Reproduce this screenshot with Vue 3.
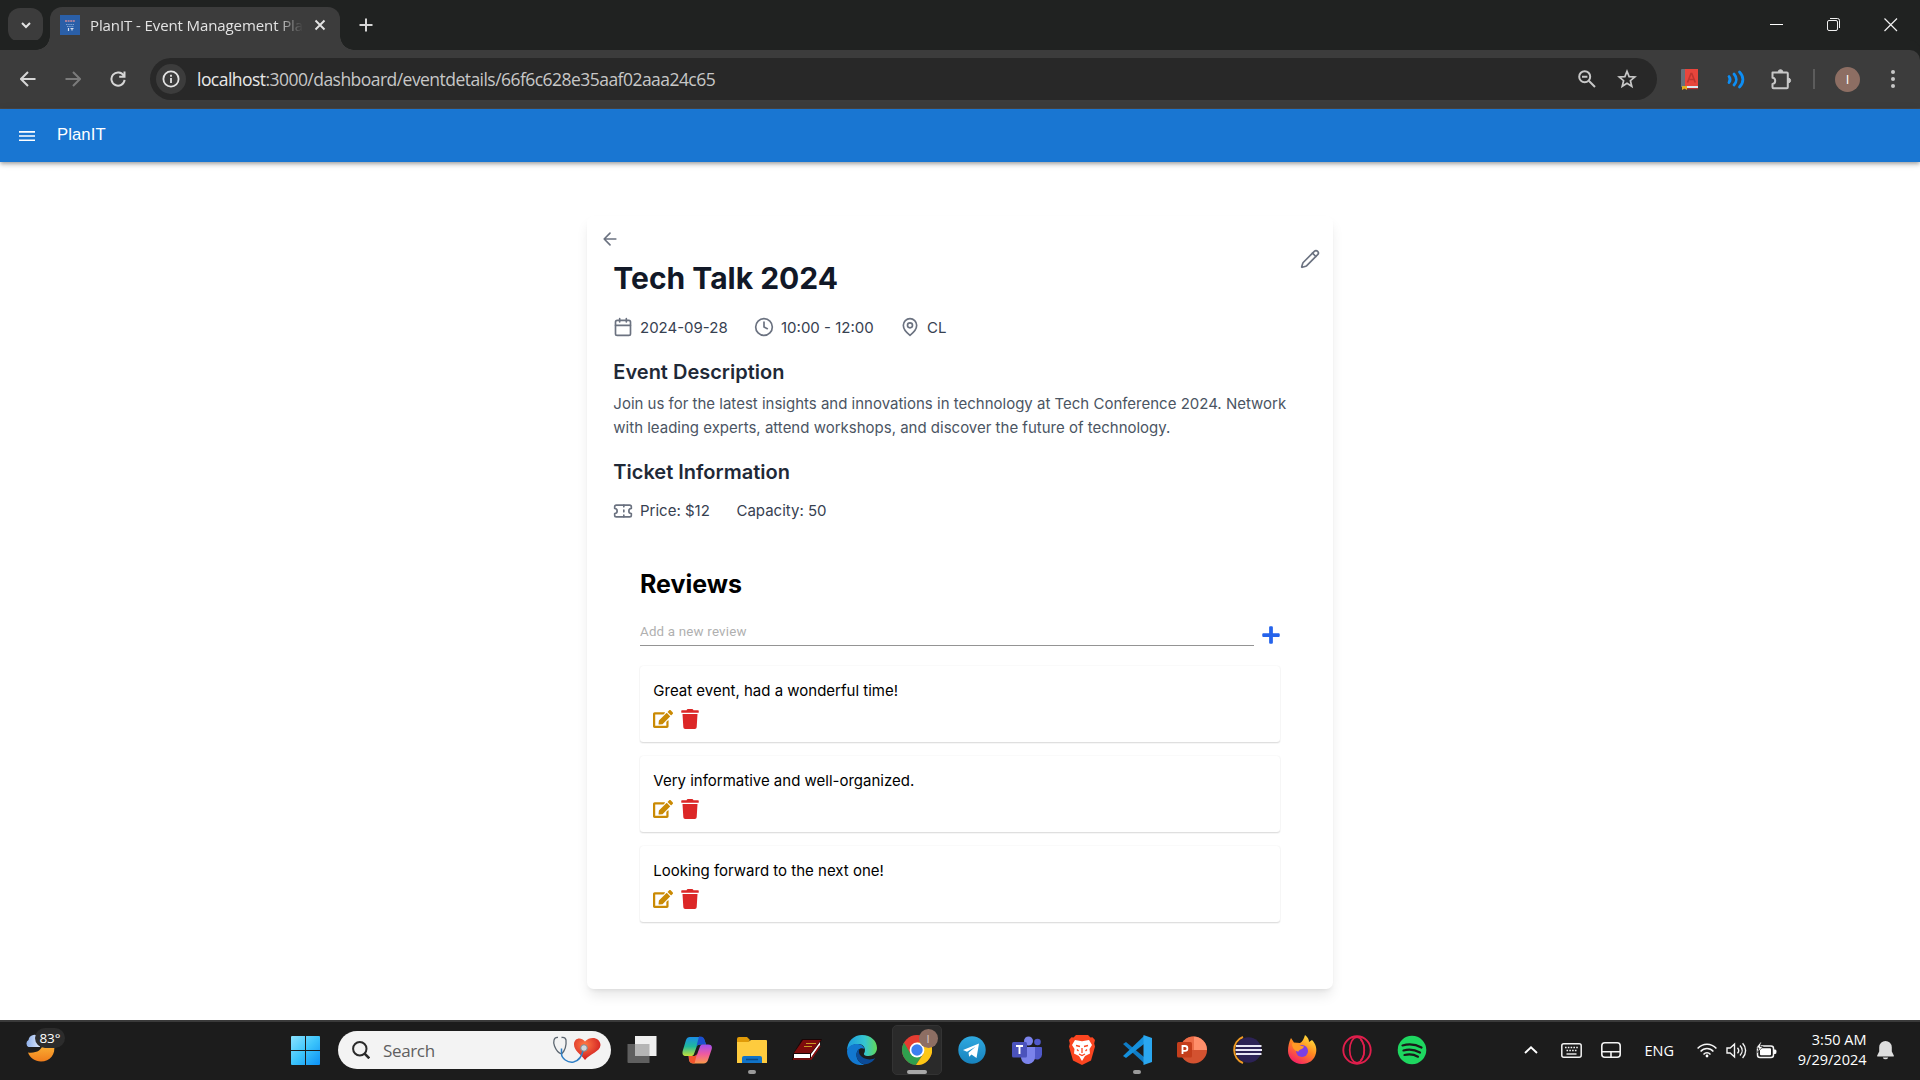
<script setup>
const reviews = [
  'Great event, had a wonderful time!',
  'Very informative and well-organized.',
  'Looking forward to the next one!',
]
</script>

<template>
  <div class="screen">
    <div class="tabstrip">
      <button class="tab-search"><svg width="12" height="12" viewBox="0 0 12 12"><path d="M2 4l4 4 4-4" fill="none" stroke="#e3e3e3" stroke-width="2" /></svg></button>
      <div class="tab">
        <svg class="favicon" viewBox="0 0 20 20"><rect width="20" height="20" fill="#2a5fa8" /><path d="M5 6h10" stroke="#c98a9c" stroke-width="1.6" stroke-dasharray="2 .6" /><path d="M6 9.500h8M7 11.500h7" stroke="#7ea3d4" stroke-width="1.200" stroke-dasharray="1.500 .7" /><path d="M8.500 13v3M10.500 13.500h3M12 13.500v2" stroke="#d5dfef" stroke-width="1.200" /></svg>
        <span class="tab-title">PlanIT - Event Management Plat</span>
        <svg class="tab-close" width="12" height="12" viewBox="0 0 12 12"><path d="M1.500 1.500l9 9M10.500 1.500l-9 9" stroke="#e3e3e3" stroke-width="1.900" /></svg>
      </div>
      <svg class="new-tab" width="14" height="14" viewBox="0 0 14 14"><path d="M7 .5v13M.5 7h13" stroke="#d6d6d6" stroke-width="2" /></svg>
      <div class="win">
        <svg width="14" height="14" viewBox="0 0 14 14"><path d="M0 6.500h13" stroke="#fff" /></svg>
        <svg width="14" height="14" viewBox="0 0 14 14" fill="none" stroke="#f0f0f0"><rect x=".5" y="2.500" width="10" height="10" rx="1.500" /><path d="M3 .5h7.500a2 2 0 0 1 2 2V10" /></svg>
        <svg width="14" height="14" viewBox="0 0 14 14"><path d="M.5.5l12.500 12.500M13 .5L.5 13" stroke="#f0f0f0" stroke-width="1.200" /></svg>
      </div>
    </div>

    <div class="toolbar">
      <svg class="nav back" width="16" height="16" viewBox="0 0 16 16"><path d="M15.500 8H1.500M8 1L1 8l7 7" /></svg>
      <svg class="nav fwd" width="16" height="16" viewBox="0 0 16 16"><path d="M.5 8h14M8 1l7 7-7 7" /></svg>
      <svg class="nav rel" width="16" height="16" viewBox="0 0 16 16"><path d="M13.700 4.600A6.600 6.600 0 1 0 14.600 8.800M14.500.5v5.300H9.200" /></svg>
      <div class="omnibox">
        <span class="info"><svg width="18" height="18" viewBox="0 0 18 18"><circle cx="9" cy="9" r="7.600" fill="none" stroke="#e3e3e3" stroke-width="1.800" /><path d="M9 8v5M9 4.800v1.900" stroke="#e3e3e3" stroke-width="1.800" /></svg></span>
        <span class="url"><b>localhost</b>:3000/dashboard/eventdetails/66f6c628e35aaf02aaa24c65</span>
        <svg class="mag" width="18" height="18" viewBox="0 0 18 18" fill="none" stroke="#c7c7c7" stroke-width="2"><circle cx="6.700" cy="6.700" r="5.500" /><path d="M10.800 10.800l6.200 6.200M4 6.700h5.400" /></svg>
        <svg class="star" width="20" height="20" viewBox="0 0 20 20"><path d="M10 2.300l2.100 5.300 5.700.4-4.400 3.700 1.400 5.600L10 14.200l-4.800 3.100 1.400-5.600L2.200 8l5.700-.4z" fill="none" stroke="#c7c7c7" stroke-width="1.700" /></svg>
      </div>
      <svg class="ext-book" width="18" height="21" viewBox="0 0 18 21"><path d="M0 1q0-1 1-1h3v18H0z" fill="#66707a" /><path d="M4 0h13v17H4z" fill="#e8453c" /><path d="M2 17h15v2.500H2z" fill="#dbe6f0" /><path d="M1 19h16v1.200H1z" fill="#b52d2d" /><path d="M6.500 13.500L10 4.500h.8l3.500 9M8 10.500h5" stroke="#bf352f" stroke-width="1.600" fill="none" /><path d="M1 17h5v4l-2.500-1.500L1 21z" fill="#e3b021" /></svg>
      <svg class="ext-wave" width="18" height="19" viewBox="0 0 18 19" fill="none" stroke="#0d8ef5" stroke-width="2.800" stroke-linecap="round"><path d="M2 6.500c1.400 1.800 1.400 4 0 6M7 4c3 3.300 3 7.700 0 11M12.500 2c4.500 4.500 4.500 10.500 0 15" /></svg>
      <svg class="ext-puz" width="21" height="21" viewBox="0 0 21 21"><path d="M1.500 3.500h14.300q1 0 1 1V18.300q0 1-1 1H2.500q-1 0-1-1V15c3.600-.3 3.600-6 0-6.300z" fill="none" stroke="#c7c7c7" stroke-width="2" stroke-linejoin="round" /><path d="M7.200 3a2.300 2.300 0 0 1 4.600 0zM17.300 9.200a2.300 2.300 0 0 1 0 4.600z" fill="#c7c7c7" stroke="#c7c7c7" /></svg>
      <span class="sep"></span>
      <span class="avatar">I</span>
      <svg class="dots" width="4" height="18" viewBox="0 0 4 18" fill="#c7c7c7"><circle cx="2" cy="2" r="2" /><circle cx="2" cy="9" r="2" /><circle cx="2" cy="16" r="2" /></svg>
    </div>

    <header class="appbar">
      <svg width="16" height="10" viewBox="0 0 16 10"><path d="M0 .8h16M0 5h16M0 9.200h16" stroke="#fff" stroke-width="1.650" /></svg>
      <span class="brand">PlanIT</span>
    </header>

    <main class="page">
      <section class="card">
        <div class="head">
          <div>
            <svg class="lu arrow" viewBox="0 0 24 24"><path d="m12 19-7-7 7-7M19 12H5" /></svg>
            <h1>Tech Talk 2024</h1>
          </div>
          <svg class="lu pencil" viewBox="0 0 24 24"><path d="M21.174 6.812a1 1 0 0 0-3.986-3.987L3.842 16.174a2 2 0 0 0-.5.83l-1.321 4.352a.5.5 0 0 0 .623.622l4.353-1.320a2 2 0 0 0 .83-.497z" /><path d="m15 5 4 4" /></svg>
        </div>
        <div class="meta">
          <div><svg class="lu" viewBox="0 0 24 24"><path d="M8 2v4M16 2v4M3 10h18" /><rect width="18" height="18" x="3" y="4" rx="2" /></svg><span>2024-09-28</span></div>
          <div><svg class="lu" viewBox="0 0 24 24"><circle cx="12" cy="12" r="10" /><path d="M12 6v6l4 2" /></svg><span>10:00 - 12:00</span></div>
          <div><svg class="lu" viewBox="0 0 24 24"><path d="M20 10c0 6-8 12-8 12s-8-6-8-12a8 8 0 0 1 16 0Z" /><circle cx="12" cy="10" r="3" /></svg><span>CL</span></div>
        </div>
        <h2>Event Description</h2>
        <p class="desc">Join us for the latest insights and innovations in technology at Tech Conference 2024. Network<br>with leading experts, attend workshops, and discover the future of technology.</p>
        <h2 class="h2b">Ticket Information</h2>
        <div class="meta tick">
          <div><svg class="lu" viewBox="0 0 24 24"><path d="M2 9a3 3 0 0 1 0 6v2a2 2 0 0 0 2 2h16a2 2 0 0 0 2-2v-2a3 3 0 0 1 0-6V7a2 2 0 0 0-2-2H4a2 2 0 0 0-2 2Z" /><path d="M13 5v2M13 17v2M13 11v2" /></svg><span>Price: $12</span></div>
          <div><span>Capacity: 50</span></div>
        </div>
        <div class="reviews">
          <h3>Reviews</h3>
          <div class="add">
            <div class="field"><span>Add a new review</span></div>
            <svg class="fa plus" viewBox="0 0 448 512"><path d="M416 208H272V64c0-17.670-14.330-32-32-32h-32c-17.670 0-32 14.330-32 32v144H32c-17.670 0-32 14.330-32 32v32c0 17.670 14.330 32 32 32h144v144c0 17.670 14.330 32 32 32h32c17.670 0 32-14.330 32-32V304h144c17.670 0 32-14.330 32-32v-32c0-17.670-14.330-32-32-32z" /></svg>
          </div>
          <article v-for="r in reviews" :key="r" class="review">
            <p>{{ r }}</p>
            <div class="acts">
              <svg class="fa edit" viewBox="0 0 576 512"><path d="M402.600 83.200l90.200 90.200c3.800 3.800 3.800 10 0 13.800L274.400 405.600l-92.800 10.300c-12.400 1.400-22.900-9.100-21.500-21.500l10.300-92.800L388.800 83.200c3.800-3.800 10-3.800 13.800 0zm162-22.900l-48.800-48.800c-15.200-15.200-39.900-15.200-55.200 0l-35.400 35.400c-3.800 3.800-3.800 10 0 13.800l90.200 90.200c3.800 3.800 10 3.800 13.800 0l35.400-35.400c15.200-15.300 15.200-40 0-55.200zM384 346.200V448H64V128h229.800c3.200 0 6.200-1.300 8.500-3.500l40-40c7.600-7.600 2.200-20.500-8.500-20.500H48C21.500 64 0 85.500 0 112v352c0 26.500 21.500 48 48 48h352c26.500 0 48-21.500 48-48V306.200c0-10.700-12.900-16-20.500-8.500l-40 40c-2.200 2.300-3.500 5.300-3.500 8.500z" /></svg>
              <svg class="fa trash" viewBox="0 0 448 512"><path d="M432 32H312l-9.400-18.700A24 24 0 0 0 281.100 0H166.800a23.720 23.720 0 0 0-21.400 13.300L136 32H16A16 16 0 0 0 0 48v32a16 16 0 0 0 16 16h416a16 16 0 0 0 16-16V48a16 16 0 0 0-16-16zM53.200 467a48 48 0 0 0 47.900 45h245.800a48 48 0 0 0 47.900-45L416 128H32z" /></svg>
            </div>
          </article>
        </div>
      </section>
    </main>

    <footer class="taskbar">
      <div class="weather">
        <svg width="32" height="32" viewBox="0 0 32 32"><defs><linearGradient id="moon" x1="0" y1="0" x2="0" y2="1"><stop offset="0" stop-color="#fbb637" /><stop offset="1" stop-color="#f07d1c" /></linearGradient><linearGradient id="cloud" x1="0" y1="0" x2="1" y2="0"><stop offset="0" stop-color="#8fb0ea" /><stop offset="1" stop-color="#dbe7fb" /></linearGradient></defs><path d="M3 20.500c8 1 14-2 15-9l11 1c2 10-4 17-13 17C10 29.500 5 26 3 20.500z" fill="url(#moon)" /><path d="M3.500 15a4 4 0 0 1 0-7 6 6 0 0 1 11-2.500L15 15z" fill="url(#cloud)" /></svg>
        <span class="temp">83°</span>
      </div>
      <svg class="start" width="29" height="29" viewBox="0 0 29 29"><defs><linearGradient id="win" x1="0" y1="0" x2="1" y2="1"><stop offset="0" stop-color="#8be3ff" /><stop offset=".5" stop-color="#3cc4fb" /><stop offset="1" stop-color="#0b90f5" /></linearGradient></defs><path d="M0 1a1 1 0 0 1 1-1h13v14H0zM15 0h13a1 1 0 0 1 1 1v13H15zM0 15h14v14H1a1 1 0 0 1-1-1zM15 15h14v13a1 1 0 0 1-1 1H15z" fill="url(#win)" /></svg>
      <div class="search">
        <svg width="18" height="18" viewBox="0 0 18 18" fill="none" stroke="#2a2a2a" stroke-width="2"><circle cx="7.800" cy="7.800" r="6.700" /><path d="M12.600 12.600l4.700 4.700" stroke-width="2.600" /></svg>
        <span>Search</span>
        <svg class="doc" width="50" height="28" viewBox="0 0 50 28"><defs><radialGradient id="heart" cx=".4" cy=".3" r=".7"><stop offset="0" stop-color="#ff7a45" /><stop offset="1" stop-color="#cf1a1f" /></radialGradient></defs><path d="M33 24C29 18 22 15 22 8.500 22 2 29 .5 33 5.500 38 0 48 1 48.500 9 48 16 38 17.500 33 24z" fill="url(#heart)" /><path d="M6 1.500C1.500 1 1 6 2.500 10c1.500 4 4 7 7 8 4-4 5-9 4.500-14C13.500 2 12 1 9.500 1.500" fill="none" stroke="#5c6670" stroke-width="1.300" /><path d="M9.500 12.500v5c0 5 6 9.500 12 8.500 7-1.500 9-8 10-13" fill="none" stroke="#2f7fc6" stroke-width="1.500" /><circle cx="32" cy="12" r="3.300" fill="#cfd6dc" stroke="#7c858d" /></svg>
      </div>
      <div class="apps">
        <div class="app"><svg viewBox="0 0 30 30"><path d="M.5 9h22v19H1.500a1 1 0 0 1-1-1z" fill="#5f5f5f" /><path d="M8 1h21.500v20H8z" fill="#efefef" /><path d="M8 9h14.500v12H8z" fill="#b5b5b5" /></svg></div>
        <div class="app"><svg viewBox="0 0 30 30"><defs><linearGradient id="cpa" x1="0" y1="0" x2="0" y2="1"><stop offset="0" stop-color="#1b8de6" /><stop offset=".5" stop-color="#20b99b" /><stop offset="1" stop-color="#c5e03a" /></linearGradient><linearGradient id="cpb" x1="0" y1="0" x2="0" y2="1"><stop offset="0" stop-color="#a04ff0" /><stop offset=".5" stop-color="#ef5aa0" /><stop offset="1" stop-color="#fb9a4a" /></linearGradient></defs><path d="M8 2h10c3 0 4 1.500 4.800 4L24 9.500h-6c-2 0-3 .8-3.600 3L12 19c-.6 1.500-1.500 2-3 2H4c-3 0-4-2-3.300-5L4 5c.7-2 2-3 4-3z" fill="url(#cpa)" /><path d="M17 1.500h1c3 0 4 1.500 4.800 4L24 9.500h-6c-2 0-3 .8-3.600 2L17 1.500z" fill="#1b4fd0" /><path d="M21 9.500h5c3.500 0 4.500 2 3.600 5L26 25c-.8 2-2 3.500-4.500 3.500h-10c-3 0-4-1.500-4.500-3.500l-.5-4H12c2 0 3-.8 3.600-3L18 11.500c.6-1.500 1.500-2 3-2z" fill="url(#cpb)" /><path d="M7 21h4.500c2 0 2.500-.5 3.500-2.500L12.500 28.500c-3.500 0-5-1.500-5.500-4z" fill="#f2542d" /></svg></div>
        <div class="app run"><svg viewBox="0 0 30 30"><path d="M0 4a2 2 0 0 1 2-2h8l3 3-3 4H0z" fill="#e09a08" /><path d="M0 7h11l3-2h15a1 1 0 0 1 1 1v22H0z" fill="#fecb3e" /><path d="M5 28v-5a2 2 0 0 1 2-2h16a2 2 0 0 1 2 2v5z" fill="#1173c7" /><path d="M9 24.500h12" stroke="#0a4a86" stroke-width="1.500" /></svg></div>
        <div class="app"><svg viewBox="0 0 30 30"><path d="M10 4h20l-3 6-9 15H0l1-6z" fill="#1a0505" /><path d="M11 5h18L19 18H2z" fill="#7e0c0c" /><path d="M2 19h16v4H2zM19 19l9-12v3l-9 13z" fill="#fff" /><path d="M1 24h18l9-13" stroke="#8a1010" stroke-width="1.600" fill="none" /><path d="M14 8.500h10M12 11.500h8" stroke="#c99a26" stroke-width="1.200" /></svg></div>
        <div class="app"><svg viewBox="0 0 30 30"><defs><linearGradient id="ed" x1="0" y1="0" x2="1" y2="0"><stop offset="0" stop-color="#1c9be0" /><stop offset=".6" stop-color="#35c6d0" /><stop offset="1" stop-color="#62d957" /></linearGradient></defs><path d="M15 0c9 0 15 6 15 13 0 5-4 8-8.500 8-4 0-5.500-1.500-4-3.500C19 14 17 9 11 9 6 9 1 12 0 16 0 6 7 0 15 0z" fill="url(#ed)" /><path d="M0 16C1 11 6 8.500 11 9c3.500.3 6 2.700 6.500 5-4-2-8 1-8 6 0 5 4 9 8.500 9.600C8 32 0 25 0 16z" fill="#1278d0" /><path d="M12.500 14C9 16 8.500 21 11 25c2.500 4 7 5 10 3.800 3-1 6-3.300 7.300-5.800C23 26 16 24 13 20c-1.300-2-1.500-4-.5-6z" fill="#0b4b98" /></svg></div>
        <div class="app active"><svg viewBox="0 0 30 30"><circle cx="15" cy="15" r="15" fill="#e53c31" /><path d="M2 7.500A15 15 0 0 0 14 30l7.500-11.500L15 15 8.500 18.700z" fill="#2fa04e" /><path d="M28 7.500H15l6.500 11.200L14 30A15 15 0 0 0 28 7.500z" fill="#fdc715" /><circle cx="15" cy="15" r="7.400" fill="#fff" /><circle cx="15" cy="15" r="5.700" fill="#3b7ff0" /></svg><span class="badge">I</span></div>
        <div class="app"><svg viewBox="0 0 30 30"><defs><linearGradient id="tg" x1="0" y1="0" x2="0" y2="1"><stop offset="0" stop-color="#2fa9e0" /><stop offset="1" stop-color="#1782bd" /></linearGradient></defs><circle cx="15" cy="15" r="13.700" fill="url(#tg)" /><path d="M6 15l16-6.500-2.500 14.500-5-3.500-2.300 2.300-.7-4 7-6-8.500 5z" fill="#fff" /></svg></div>
        <div class="app"><svg viewBox="0 0 30 30"><circle cx="16.500" cy="6" r="4.500" fill="#7b83eb" /><circle cx="25.500" cy="7" r="3.300" fill="#5059c9" /><path d="M20 12h9a1 1 0 0 1 1 1v6.500a5 5 0 0 1-8 4z" fill="#5059c9" /><path d="M9 12h14v9a7 7 0 0 1-14 2z" fill="#7b83eb" /><rect y="7" width="15" height="15.500" rx="1.500" fill="#4b53bc" /><path d="M4 11h7M7.500 11v8" stroke="#fff" stroke-width="1.900" /></svg></div>
        <div class="app"><svg viewBox="0 0 30 30"><path d="M9 0h12l2.500 2.500 2-.3L28 5l-.8 3.500.8 3-4 14L15 30l-9-4.500-4-14 .8-3L2 5l2.500-2.800 2 .3z" fill="#fb4520" /><path d="M8 5l7 1.200L22 5l3 5-2.500 4 .5 4.500-5 2.500L15 26l-3-5-5-2.500.5-4.500L5 10z" fill="#fff" /><path d="M9 10.500l4 1M21 10.500l-4 1M15 13v5M12 19l3 1.500 3-1.500M10 14.500l1.500 1.500M20 14.500L18.500 16" stroke="#fb4520" stroke-width="1.300" fill="none" /></svg></div>
        <div class="app run"><svg viewBox="0 0 30 30"><path d="M1 9l3-2 18 15v6z" fill="#0f7cc5" /><path d="M1 21l3 2L22 9V1z" fill="#1590dc" /><path d="M21.500 0L30 3v24l-8.500 3z" fill="#2aa7f0" /></svg></div>
        <div class="app"><svg viewBox="0 0 30 30"><circle cx="16.500" cy="15" r="13.500" fill="#d35230" /><path d="M16.500 1.500A13.500 13.500 0 0 1 30 15H16.500z" fill="#ff8f6b" /><path d="M16.500 1.500A13.500 13.500 0 0 0 3 15h13.500z" fill="#ed6c47" /><rect y="7" width="15" height="15.500" rx="1.500" fill="#c43e1c" /><path d="M5.500 19v-8H8a2.300 2.300 0 0 1 0 4.800H5.500" stroke="#fff" stroke-width="1.800" fill="none" /></svg></div>
        <div class="app"><svg viewBox="0 0 30 30"><path d="M11 2a14 14 0 0 0 0 26" fill="none" stroke="#f09a24" stroke-width="2" /><circle cx="16.500" cy="15" r="12.800" fill="#2c2255" /><path d="M4 11h25.500M3.500 15h26.500M4 19h25.500" stroke="#e8e6f4" stroke-width="1.900" /></svg></div>
        <div class="app"><svg viewBox="0 0 30 30"><defs><linearGradient id="ff" x1=".8" y1="0" x2=".2" y2="1"><stop offset="0" stop-color="#ffe93f" /><stop offset=".45" stop-color="#ff8a1f" /><stop offset="1" stop-color="#f5156c" /></linearGradient></defs><path d="M18 0c3 2 4 5 4 7l3-2c4 4 5 9 4 13-1.500 7-7 11-14 11C7 29 1 23 1 16c0-5 1-9 3-13l3 4.500L13 8c2-1 4-4 5-8z" fill="url(#ff)" /><circle cx="15" cy="16" r="6" fill="#7b3fe4" /><path d="M5 8.500c3-1 5-.5 8 2l4 1c-1 3-4.500 2.500-5.500 5C9 16.500 5 14 5 8.500z" fill="#ff9a26" /></svg></div>
        <div class="app"><svg viewBox="0 0 30 30" fill="none" stroke="#e01e4c"><circle cx="15" cy="15" r="13.700" stroke-width="1.900" /><ellipse cx="15" cy="15" rx="7.300" ry="12.800" stroke-width="1.700" /><path d="M18.500 4.500c5 5 5 16 0 21" stroke-width="1.500" /></svg></div>
        <div class="app"><svg viewBox="0 0 30 30"><circle cx="15" cy="15" r="14.300" fill="#1ed760" /><path d="M5.500 10.500c7-2 13.500-1 19 2M6.500 15.500c6-1.600 11.500-.7 16.500 2M7.500 20c5-1.200 9.500-.6 13.500 1.700" fill="none" stroke="#1a1a1a" stroke-width="2.200" stroke-linecap="round" /></svg></div>
      </div>
      <div class="tray">
        <svg class="chev" width="14" height="8" viewBox="0 0 14 8"><path d="M1 7l6-5.700L13 7" fill="none" stroke="#fff" stroke-width="1.900" /></svg>
        <svg class="kb" width="21" height="15" viewBox="0 0 21 15"><rect x=".8" y=".8" width="19.400" height="13.400" rx="2" fill="none" stroke="#f2f2f2" stroke-width="1.500" /><path d="M4 4.500h13M5.500 7.500h10" stroke="#f2f2f2" stroke-width="1.600" stroke-dasharray="1.600 1.200" /><path d="M5.500 11h10" stroke="#f2f2f2" stroke-width="1.400" /></svg>
        <svg class="tp" width="20" height="16" viewBox="0 0 20 16"><rect x=".8" y=".8" width="18.400" height="14.400" rx="3" fill="none" stroke="#f2f2f2" stroke-width="1.600" /><path d="M1 9.800h18M10 9.800V15" stroke="#f2f2f2" stroke-width="1.600" /></svg>
        <span class="eng">ENG</span>
        <svg class="wifi" width="20" height="15" viewBox="0 0 20 15" fill="none" stroke="#f4f4f4" stroke-width="1.500"><path d="M.6 5.600c5.300-5.800 13.500-5.800 18.800 0M3.600 8.600c3.600-4 9.200-4 12.800 0M6.500 11.400c2-2.200 5-2.200 7 0" /><circle cx="10" cy="13" r="1.400" fill="#fff" stroke="none" /></svg>
        <svg class="vol" width="21" height="17" viewBox="0 0 21 17" fill="none" stroke="#f4f4f4" stroke-width="1.400"><path d="M1 6v5h3.200l4.300 4V2L4.200 6zM11.500 5.800c1.500 1.700 1.500 3.900 0 5.600M14 3.500c2.800 3 2.800 7 0 10M16.600 1.300c4 4.300 4 10.300 0 14.600" /></svg>
        <svg class="bat" width="21" height="17" viewBox="0 0 21 17"><rect x="1.500" y="4" width="16" height="11.500" rx="2.500" fill="none" stroke="#f4f4f4" stroke-width="1.500" /><rect x="4" y="6.300" width="11" height="7" rx="1" fill="#fff" /><path d="M18 7.500h1.200q1.300 0 1.300 2.200t-1.300 2.200H18z" fill="#fff" /><path d="M4.500 0L0 6h3l-1.500 4.500L7 4.500H4L5.500 0z" fill="#fff" stroke="#1c1c1c" stroke-width=".7" /></svg>
        <div class="clock"><span>3:50 AM</span><span>9/29/2024</span></div>
        <svg class="bell" width="17" height="19" viewBox="0 0 17 19" fill="#dedede"><path d="M8.500 0a6.300 6.300 0 0 1 6.300 6.300v4.200l2 4q.3 1-.8 1H1q-1.100 0-.8-1l2-4V6.300A6.300 6.300 0 0 1 8.500 0zM5.800 16.500h5.400a2.800 2.500 0 0 1-5.400 0z" /></svg>
      </div>
    </footer>
  </div>
</template>

<style>
body { margin: 0; overflow: hidden; background: #fff; }
</style>

<style scoped>
* { box-sizing: border-box; }
svg { display: block; flex: none; }
h1, h2, h3, p { margin: 0; }
span { white-space: nowrap; }
.screen { width: 1920px; height: 1080px; display: flex; flex-direction: column; font-family: "Open Sans", sans-serif; }

.tabstrip { height: 50px; flex: none; background: #202221; display: flex; align-items: flex-start; padding: 7px 0 0 8px; }
.tab-search { width: 35px; height: 34px; margin: 1px 7px 0 0; padding: 0; border: 0; border-radius: 12px; background: #3c3c3c; display: flex; align-items: center; justify-content: center; }
.tab { position: relative; width: 290px; height: 43px; background: #3c3c3c; border-radius: 12px 12px 0 0; display: flex; align-items: center; padding: 0 0 7px 10px; }
.tab::before, .tab::after { content: ""; position: absolute; bottom: 0; width: 14px; height: 14px; }
.tab::before { left: -14px; background: radial-gradient(circle at 0 0, transparent 13.5px, #3c3c3c 14px); }
.tab::after { right: -14px; background: radial-gradient(circle at 100% 0, transparent 13.5px, #3c3c3c 14px); }
.favicon { width: 20px; height: 20px; }
.tab-title { width: 223px; margin: 0 -12px 0 10px; font-size: 15px; line-height: 22px; color: #e3e3e3; letter-spacing: -.1px; -webkit-mask-image: linear-gradient(90deg, #000 186px, transparent 213px); mask-image: linear-gradient(90deg, #000 186px, transparent 213px); }
.tab-close { margin-left: 13px; }
.new-tab { margin: 11px 0 0 18.500px; }
.win { margin: 11px 22px 0 auto; display: flex; gap: 43px; }

.toolbar { height: 59px; flex: none; background: #3c3c3c; border-bottom: 1px solid #4a4644; border-radius: 0 10px 0 0; box-shadow: 0 -10px 0 0 #202221; display: flex; align-items: center; }
.nav { fill: none; stroke: #d6d6d6; stroke-width: 2; }
.back { margin-left: 20px; }
.fwd { margin-left: 29px; stroke: #7b7b7b; }
.rel { margin-left: 28.500px; }
.omnibox { margin-left: 24.500px; width: 1507px; height: 42px; border-radius: 21px; background: #282828; display: flex; align-items: center; padding-left: 6px; }
.info { width: 30px; height: 30px; border-radius: 50%; background: #3c3c3c; display: flex; align-items: center; justify-content: center; }
.url { margin-left: 11px; font-size: 17.500px; line-height: 24px; color: #c7c7c7; letter-spacing: -.54px; }
.url b { font-weight: 400; color: #e8e8e8; }
.mag { margin-left: auto; }
.star { margin: 0 20px 0 21px; }
.ext-book { margin-left: 24px; }
.ext-wave { margin-left: 28px; }
.ext-puz { margin-left: 26px; }
.sep { width: 2px; height: 20px; margin-left: 21px; background: #5c5c5c; }
.avatar { width: 25px; height: 25px; margin-left: 20px; border-radius: 50%; background: #8d6e63; color: #fff; font-size: 13px; line-height: 25px; text-align: center; }
.dots { margin-left: 30.500px; }

.appbar { position: relative; height: 53px; flex: none; background: #1976d2; display: flex; align-items: center; padding-left: 19px; box-shadow: 0 2px 3px -1px rgba(0,0,0,.2), 0 3px 4px rgba(0,0,0,.14), 0 1px 8px rgba(0,0,0,.12); }
.appbar svg { margin-top: 1px; }
.brand { margin: -1px 0 0 22px; font: 16.670px/24px "Liberation Sans", sans-serif; letter-spacing: .1px; color: #fff; }

.page { flex: 1; background: #fff; padding-top: 53.700px; font-family: Inter, sans-serif; }
.card { width: 746.670px; height: 773.300px; margin: 0 auto; background: #fff; border-radius: 6.670px; padding: 13.300px 26.670px 0; box-shadow: 0 8.300px 12.500px -2.500px rgba(0,0,0,.1), 0 3.300px 5px -3.300px rgba(0,0,0,.1); }
.lu { width: 20px; height: 20px; fill: none; stroke: #6b7280; stroke-width: 2; stroke-linecap: round; stroke-linejoin: round; }
.head { display: flex; justify-content: space-between; }
.arrow { margin-left: -13.300px; }
.pencil { margin: 20px -13.300px 0 0; }
h1 { margin-top: 12.600px; font-size: 30px; line-height: 33.300px; font-weight: 700; color: #111827; }
.meta { margin-top: 21.200px; height: 23.300px; display: flex; align-items: center; gap: 26.670px; font-size: 15px; color: #374151; }
.meta div { display: flex; align-items: center; gap: 6.670px; }
.meta svg { margin-top: -1px; }
h2 { margin-top: 20px; font-size: 20px; line-height: 26.670px; font-weight: 600; color: #1f2937; }
.desc { margin-top: 6.300px; font-size: 15px; line-height: 24px; color: #4b5563; }
.h2b { margin-top: 18.900px; }
.tick { margin-top: 13.300px; }
.tick svg { margin-top: 0; }
.reviews { padding: 46.300px 26.670px 0; }
h3 { font-size: 25px; line-height: 30px; font-weight: 700; color: #000; }
.add { display: flex; justify-content: space-between; align-items: flex-end; margin: 20px 0 20px; height: 27px; }
.field { width: 614px; height: 27px; border-bottom: 1px solid #949494; font: 13.330px/26px Roboto, sans-serif; color: #b0b0b0; letter-spacing: .2px; }
.fa { width: 20px; height: 20px; }
.plus { fill: #2563eb; margin: 0 -.5px .3px 0; }
.review { height: 76.670px; margin-bottom: 13.330px; padding: 13.330px; border-radius: 3.330px; background: #fff; box-shadow: 0 .83px 1.670px rgba(0,0,0,.09), 0 .83px 1.670px -.83px rgba(0,0,0,.08); }
.review p { font-size: 15px; line-height: 23.330px; color: #000; }
.acts { display: flex; gap: 6.670px; margin-top: 6.670px; }
.edit { fill: #ca8a04; }
.trash { fill: #dc2626; }

.taskbar { height: 60px; flex: none; background: #1c1c1c; border-top: 2px solid #3a3a3a; padding-bottom: 2px; display: flex; align-items: center; color: #fff; }
.weather { position: relative; width: 40px; height: 36px; margin-left: 25px; }
.temp { position: absolute; left: 10px; top: -4px; width: 30px; height: 20px; border-radius: 10px; background: #2c2c2c; font-size: 13.500px; line-height: 20px; text-align: center; }
.start { margin-left: 226px; }
.search { width: 273px; height: 38px; margin-left: 18px; border-radius: 19px; background: #f3f3f3; display: flex; align-items: center; padding: 0 9px 0 14px; font-size: 17px; letter-spacing: -.35px; color: #5f5f5f; }
.search span { margin-left: 13px; }
.doc { margin-left: auto; }
.apps { display: flex; margin-left: 3.500px; }
.app { position: relative; width: 55px; height: 50px; display: flex; align-items: center; justify-content: center; }
.app svg { width: 30px; height: 30px; }
.active::before { content: ""; position: absolute; inset: 0 2.500px; border-radius: 5px; background: #2a2a2a; border: 1px solid #333; }
.active svg { position: relative; }
.app.run::after, .active::after { content: ""; position: absolute; bottom: 1px; width: 8px; height: 4px; border-radius: 2px; background: #9a9a9a; }
.active::after { width: 20px; background: #a8a8a8; }
.badge { position: absolute; left: 29px; top: 4px; width: 19px; height: 19px; border-radius: 50%; background: #8d6e63; color: #d8ccc8; font-size: 11px; line-height: 19px; text-align: center; }
.tray { margin-left: auto; display: flex; align-items: center; padding-right: 26.500px; }
.kb { margin-left: 23px; }
.tp { margin-left: 19px; }
.eng { width: 30px; margin-left: 24px; font-size: 14.500px; }
.wifi { margin-left: 22px; }
.vol { margin-left: 9px; }
.bat { margin-left: 9px; }
.clock { width: 80px; margin-left: 10px; display: flex; flex-direction: column; align-items: flex-end; font-size: 14.500px; line-height: 20px; }
.bell { margin-left: 10px; }
</style>
